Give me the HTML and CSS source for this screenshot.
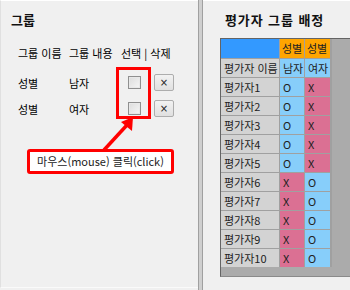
FILE: index.html
```html
<!DOCTYPE html>
<html lang="ko">
<head>
    <meta charset="UTF-8">
    <meta name="viewport" content="width=device-width, initial-scale=1.0">
    <title>평가자 그룹 배정</title>
    <link rel="stylesheet" href="styles.css">
</head>
<body>
    <div class="window">
        <section class="panel group-panel">
            <h2 class="panel-title">그룹</h2>

            <div class="group-table">
                <div class="group-row group-head">
                    <span>그룹 이름</span>
                    <span>그룹 내용</span>
                    <span>선택 | 삭제</span>
                </div>
                <div class="group-row">
                    <span>성별</span>
                    <span>남자</span>
                    <span class="actions"><span class="check"></span><button class="del">&times;</button></span>
                </div>
                <div class="group-row">
                    <span>성별</span>
                    <span>여자</span>
                    <span class="actions"><span class="check"></span><button class="del">&times;</button></span>
                </div>
            </div>

            <!-- annotation -->
            <div class="highlight"></div>
            <svg class="arrow" width="200" height="160" viewBox="0 0 200 160">
                <line x1="104" y1="150" x2="127" y2="125" stroke="#ff0000" stroke-width="3.5"/>
                <polygon points="133,117 121,122 132,131" fill="#ff0000"/>
            </svg>
            <div class="callout">마우스(mouse) 클릭(click)</div>
        </section>

        <div class="splitter"></div>

        <section class="panel assign-panel">
            <h2 class="panel-title wide">평가자 그룹 배정</h2>

            <div class="grid-view">
                <div class="cells" id="cells">
                    <div class="cell corner"></div>
                    <div class="cell col-head">성별</div>
                    <div class="cell col-head">성별</div>
                    <div class="cell row-head">평가자 이름</div>
                    <div class="cell yes">남자</div>
                    <div class="cell yes">여자</div>
                </div>
            </div>
        </section>
    </div>

    <script>
const raters = [];
for (let i = 1; i <= 10; i++) {
    raters.push({ name: '평가자' + i, male: i <= 5 });
}

function drawRows() {
    const cells = document.getElementById('cells');
    raters.forEach(r => {
        cells.insertAdjacentHTML('beforeend', `
            <div class="cell row-head">${r.name}</div>
            <div class="cell ${r.male ? 'yes' : 'no'}">${r.male ? 'O' : 'X'}</div>
            <div class="cell ${r.male ? 'no' : 'yes'}">${r.male ? 'X' : 'O'}</div>
        `);
    });
}

drawRows();
    </script>
</body>
</html>
```

FILE: styles.css
```css
body {
    margin: 0;
    background-color: #f0f0f0;
    font-family: "Noto Sans CJK KR", "Noto Sans", sans-serif;
    font-size: 11px;
    color: #000;
}
.window {
    display: flex;
    width: 350px;
    height: 290px;
    overflow: hidden;
}
.panel {
    position: relative;
    box-sizing: border-box;
    height: 288px;
    background-color: #f0f0f0;
}
.group-panel {
    width: 198px;
    flex: none;
    padding: 10px 0 0 10px;
    border-top: 1px solid #fff;
    border-left: 1px solid #e0e0e0;
    border-bottom: 1px solid #fafafa;
}
.panel-title {
    margin: 0;
    font-size: 13px;
    font-weight: bold;
    line-height: 17px;
    color: #111;
}
.panel-title.wide {
    letter-spacing: 0.9px;
    padding-left: 5px;
}
.group-table {
    margin-top: 18px;
    padding-left: 7px;
}
.group-row {
    display: grid;
    grid-template-columns: 51px 52px auto;
    align-items: center;
    height: 17px;
    margin-bottom: 9px;
    line-height: 14px;
}
.group-head {
    height: 14px;
    margin-bottom: 14px;
}
.actions {
    display: flex;
    align-items: center;
    padding-left: 7px;
}
.check {
    box-sizing: border-box;
    width: 13px;
    height: 13px;
    border: 1px solid #8f8f8f;
    background: linear-gradient(135deg, #dcdcdc, #f6f6f6);
    box-shadow: inset 0 0 0 1px #e8e8e8;
}
.del {
    box-sizing: border-box;
    width: 20px;
    height: 17px;
    margin-left: 13px;
    padding: 0;
    border: 1px solid #adadad;
    border-radius: 2px;
    background: linear-gradient(#f2f2f2, #e0e0e0);
    font-family: "DejaVu Sans", sans-serif;
    font-size: 10px;
    line-height: 14px;
    color: #222;
}
.highlight {
    position: absolute;
    left: 115px;
    top: 66px;
    width: 35px;
    height: 52px;
    box-sizing: border-box;
    border: 3px solid #ff0000;
}
.arrow {
    position: absolute;
    left: -1px;
    top: -1px;
}
.callout {
    position: absolute;
    left: 26px;
    top: 148px;
    width: 147px;
    height: 25px;
    box-sizing: border-box;
    border: 3px solid #ff0000;
    border-radius: 3px;
    background-color: #fff;
    text-align: center;
    line-height: 19px;
    font-size: 11px;
    color: #222;
}
.splitter {
    flex: none;
    width: 3px;
    height: 290px;
    border-left: 1px solid #a0a0a0;
    border-right: 1px solid #a0a0a0;
    background-color: #cfcfcf;
}
.assign-panel {
    flex: 1;
    padding: 10px 0 0 17px;
    border-top: 1px solid #fff;
}
.grid-view {
    box-sizing: border-box;
    width: 140px;
    height: 239px;
    margin-top: 10px;
    border-left: 1px solid #646464;
    border-top: 1px solid #646464;
    border-bottom: 1px solid #8a8a8a;
    background-color: #ababab;
}
.cells {
    display: grid;
    grid-template-columns: 58px 24px 25px 1px;
    grid-auto-rows: 18px;
    grid-template-rows: 19px;
    gap: 1px;
    width: max-content;
    background-color: #a0a0a0;
}
.cell {
    padding-left: 3px;
    line-height: 18px;
    font-size: 11px;
    color: #222;
    white-space: nowrap;
    overflow: hidden;
}
.cells .cell:nth-child(3n+1) {
    grid-column: 1;
}
.corner {
    background-color: #3399ff;
}
.col-head {
    background-color: #ffa500;
    padding-left: 2px;
    line-height: 19px;
}
.row-head {
    background-color: #d3d3d3;
}
.yes {
    background-color: #87cefa;
}
.no {
    background-color: #db7093;
}
```
